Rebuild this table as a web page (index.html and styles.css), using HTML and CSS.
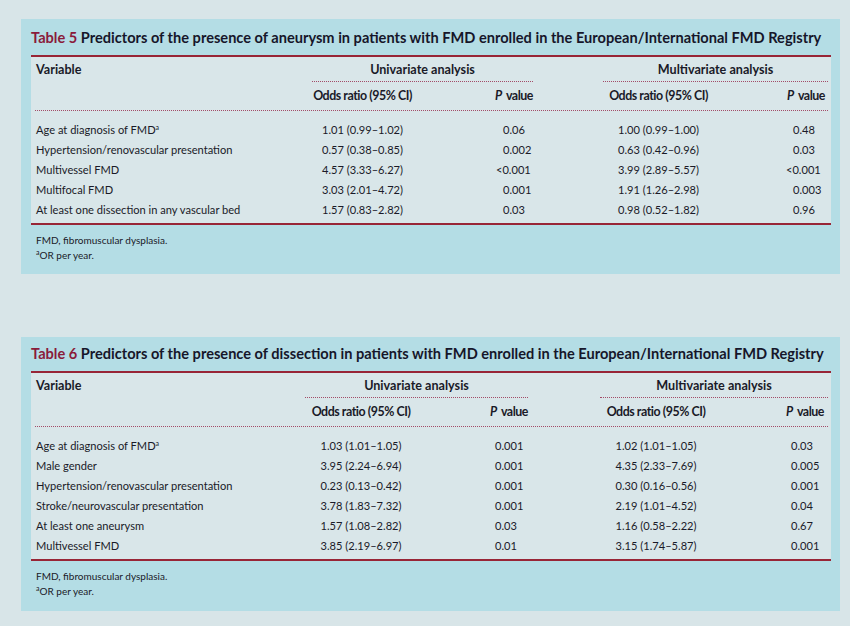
FILE: index.html
```html
<!DOCTYPE html>
<html lang="en">
<head>
<meta charset="utf-8">
<title>Tables 5 and 6</title>
<link rel="stylesheet" href="styles.css">
</head>
<body>
<main class="page">
  <section class="panel t5">
    <h2 class="title"><span class="num">Table 5</span> Predictors of the presence of aneurysm in patients with FMD enrolled in the European/International FMD Registry</h2>
    <div class="tbl">
      <div class="grid head1">
        <div class="var">Variable</div>
        <div class="span uni">Univariate analysis</div>
        <div></div>
        <div class="span multi">Multivariate analysis</div>
      </div>
      <div class="grid head2">
        <div></div>
        <div class="or">Odds ratio (95% CI)</div>
        <div class="ph"><i>P</i> value</div>
        <div></div>
        <div class="or">Odds ratio (95% CI)</div>
        <div class="ph pmh"><i>P</i> value</div>
      </div>
      <div class="grid body">
        <div class="var">Age at diagnosis of FMD<sup>a</sup></div><div class="or">1.01 (0.99–1.02)</div><div class="pu">0.06</div><div></div><div class="or">1.00 (0.99–1.00)</div><div class="pm">0.48</div>
        <div class="var">Hypertension/renovascular presentation</div><div class="or">0.57 (0.38–0.85)</div><div class="pu">0.002</div><div></div><div class="or">0.63 (0.42–0.96)</div><div class="pm">0.03</div>
        <div class="var">Multivessel FMD</div><div class="or">4.57 (3.33–6.27)</div><div class="pu"><span class="lt">&lt;</span>0.001</div><div></div><div class="or">3.99 (2.89–5.57)</div><div class="pm"><span class="lt">&lt;</span>0.001</div>
        <div class="var">Multifocal FMD</div><div class="or">3.03 (2.01–4.72)</div><div class="pu">0.001</div><div></div><div class="or">1.91 (1.26–2.98)</div><div class="pm">0.003</div>
        <div class="var">At least one dissection in any vascular bed</div><div class="or">1.57 (0.83–2.82)</div><div class="pu">0.03</div><div></div><div class="or">0.98 (0.52–1.82)</div><div class="pm">0.96</div>
      </div>
    </div>
    <div class="notes">
      <p>FMD, fibromuscular dysplasia.</p>
      <p><sup>a</sup>OR per year.</p>
    </div>
  </section>

  <section class="panel t6">
    <h2 class="title"><span class="num">Table 6</span> Predictors of the presence of dissection in patients with FMD enrolled in the European/International FMD Registry</h2>
    <div class="tbl">
      <div class="grid head1">
        <div class="var">Variable</div>
        <div class="span uni">Univariate analysis</div>
        <div></div>
        <div class="span multi">Multivariate analysis</div>
      </div>
      <div class="grid head2">
        <div></div>
        <div class="or">Odds ratio (95% CI)</div>
        <div class="ph"><i>P</i> value</div>
        <div></div>
        <div class="or">Odds ratio (95% CI)</div>
        <div class="ph pmh"><i>P</i> value</div>
      </div>
      <div class="grid body">
        <div class="var">Age at diagnosis of FMD<sup>a</sup></div><div class="or">1.03 (1.01–1.05)</div><div class="pu">0.001</div><div></div><div class="or">1.02 (1.01–1.05)</div><div class="pm">0.03</div>
        <div class="var">Male gender</div><div class="or">3.95 (2.24–6.94)</div><div class="pu">0.001</div><div></div><div class="or">4.35 (2.33–7.69)</div><div class="pm">0.005</div>
        <div class="var">Hypertension/renovascular presentation</div><div class="or">0.23 (0.13–0.42)</div><div class="pu">0.001</div><div></div><div class="or">0.30 (0.16–0.56)</div><div class="pm">0.001</div>
        <div class="var">Stroke/neurovascular presentation</div><div class="or">3.78 (1.83–7.32)</div><div class="pu">0.001</div><div></div><div class="or">2.19 (1.01–4.52)</div><div class="pm">0.04</div>
        <div class="var">At least one aneurysm</div><div class="or">1.57 (1.08–2.82)</div><div class="pu">0.03</div><div></div><div class="or">1.16 (0.58–2.22)</div><div class="pm">0.67</div>
        <div class="var">Multivessel FMD</div><div class="or">3.85 (2.19–6.97)</div><div class="pu">0.01</div><div></div><div class="or">3.15 (1.74–5.87)</div><div class="pm">0.001</div>
      </div>
    </div>
    <div class="notes">
      <p>FMD, fibromuscular dysplasia.</p>
      <p><sup>a</sup>OR per year.</p>
    </div>
  </section>
</main>
</body>
</html>
```

FILE: styles.css
```css
* { box-sizing: border-box; }

html, body {
  margin: 0;
  background: #d8e5e8;
}

body {
  font-family: Lato, "Open Sans", sans-serif;
  color: #1a1a28;
  width: 850px;
  height: 626px;
  overflow: hidden;
}

.page {
  padding: 19px 10px 0 21px;
  display: flex;
  flex-direction: column;
  gap: 63px;
}

.panel {
  width: 819px;
  background: #b4dde5;
  padding: 10px 9px 11px 10px;
}

.t6 {
  padding-top: 8px;
  padding-bottom: 12px;
}

.title {
  margin: 0 0 8px;
  font-size: 14.6px;
  line-height: 18px;
  font-weight: 700;
  color: #16162a;
  white-space: nowrap;
}

.title .num {
  color: #8a1b3b;
}

.tbl {
  background: #d9e6e9;
  border-top: 2px solid #982536;
  border-bottom: 2px solid #982536;
}

.grid {
  display: grid;
  margin: 0 3px 0 4px;
  font-size: 11.1px;
  line-height: 14px;
}

.t5 .grid { grid-template-columns: 277px 101px 120px 70px 111px 114px; }
.t6 .grid { grid-template-columns: 270px 112px 111px 72px 112px 116px; }

.head1, .head2 { font-weight: 700; }

.head1 { font-size: 12.6px; }
.head2 {
  font-size: 12.4px;
  letter-spacing: -0.45px;
}

.head1 > div { padding: 6px 0 4px; }

.head1 .var { padding-left: 1px; }

.head1 .span {
  grid-column: span 2;
  text-align: center;
  border-bottom: 1px dotted #a34c68;
}

.head2 {
  border-bottom: 1px dotted #a34c68;
}

.head2 > div { padding: 7px 0 7px; }

.head2 .ph { text-align: right; }
.head2 .ph i { margin-right: 2px; }
.t5 .head2 .pmh { padding-right: 3px; }
.t6 .head2 .pmh { padding-right: 4px; }

.body {
  padding: 9px 0 3px;
}

.body > div {
  padding: 3px 0;
  white-space: nowrap;
}

.body .var { padding-left: 1px; }

.or { text-align: center; }

.t5 .body .pu { padding-left: 90px; }
.t6 .body .pu { padding-left: 78px; }
.body .pm { padding-left: 79px; }

.lt { margin-left: -7px; }

sup {
  font-size: 7px;
  line-height: 0;
  vertical-align: 4px;
}

.notes {
  padding-left: 5px;
  margin-top: 8px;
  font-size: 10px;
  line-height: 15px;
}

.notes p { margin: 0; }
```
